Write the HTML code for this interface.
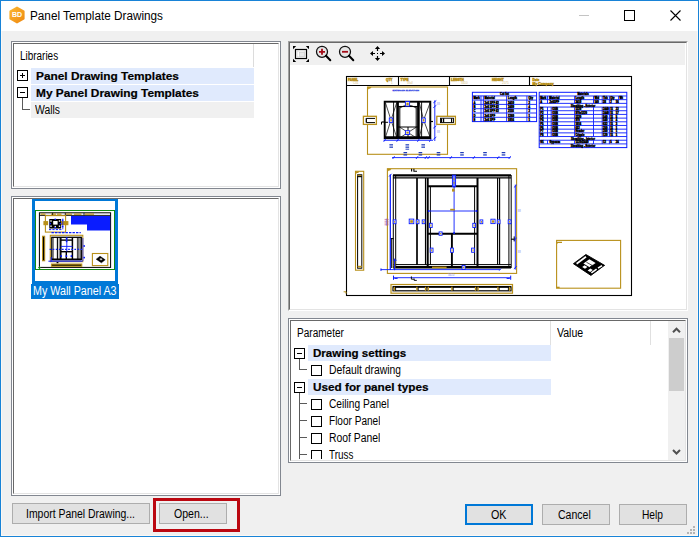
<!DOCTYPE html>
<html><head><meta charset="utf-8"><title>Panel Template Drawings</title>
<style>
html,body{margin:0;padding:0;}
body{width:699px;height:537px;overflow:hidden;background:#f0f0f0;position:relative;font-family:"Liberation Sans",sans-serif;font-size:11px;color:#000;}
.abs,.p,.in,.row,.hl,.btn,.exp,.cb,.ln,.tx{position:absolute;box-sizing:border-box;}
.p{border:1px solid #828790;background:#fff;}
.in{border:1px solid;border-color:#696969 #e3e3e3 #e3e3e3 #696969;}
.tx{height:17px;line-height:17px;white-space:nowrap;transform-origin:0 50%;}
.hl{background:#e0eafd;height:16px;}
.b{font-weight:bold;-webkit-text-stroke:0.2px #000;}
.btn{height:21px;border:1px solid #adadad;background:#e1e1e1;}
.exp{width:11px;height:11px;border:1px solid #000;background:#fff;}
.exp i{position:absolute;left:2px;top:4px;width:5px;height:1px;background:#000;}
.exp b{position:absolute;left:4px;top:2px;width:1px;height:5px;background:#000;}
.cb{width:11px;height:11px;border:1px solid #000;background:#fff;}
.ln{background:#5a5a5a;}
svg{position:absolute;left:0;top:0;}
</style></head><body>
<div class="abs" style="left:0;top:0;width:699px;height:537px;border:1px solid #1883d7;"></div><div class="abs" style="left:1px;top:1px;width:697px;height:535px;border:1px solid #fbf8f4;"></div>
<div class="abs" style="left:1px;top:1px;width:697px;height:30px;background:#fff;"></div>
<div class="tx " id="t_title" style="left:30px;top:8px;font-size:12px;transform:scaleX(0.9790);">Panel Template Drawings</div>
<div class="p" style="left:11px;top:41px;width:270px;height:148px;"></div><div class="in" style="left:13px;top:43px;width:266px;height:144px;"></div>
<div class="p" style="left:11px;top:196px;width:270px;height:300px;"></div><div class="in" style="left:13px;top:198px;width:266px;height:296px;"></div>
<div class="abs" style="left:288px;top:41px;width:400px;height:270px;background:#fff;border:1px solid;border-color:#a0a0a0 #fff #fff #a0a0a0;"></div><div class="in" style="left:289px;top:42px;width:398px;height:268px;"></div>
<div class="p" style="left:288px;top:318px;width:400px;height:145px;"></div><div class="in" style="left:290px;top:320px;width:396px;height:141px;"></div>
<div class="tx " id="t_lib" style="left:20px;top:47.6px;font-size:12px;transform:scaleX(0.8279);">Libraries</div>
<div class="abs" style="left:253px;top:44px;width:1px;height:23px;background:#dcdcdc"></div>
<div class="hl" style="left:31px;top:68px;width:223px;"></div>
<div class="tx b" id="t_tree0" style="left:35.6px;top:67px;font-size:11.6px;transform:scaleX(1.0238);">Panel Drawing Templates</div>
<div class="hl" style="left:31px;top:85px;width:223px;"></div>
<div class="tx b" id="t_tree1" style="left:35.6px;top:84px;font-size:11.6px;transform:scaleX(1.0251);">My Panel Drawing Templates</div>
<div class="hl" style="left:31px;top:102px;width:223px;background:#f0f0f0"></div>
<div class="tx " id="t_walls" style="left:35px;top:101.6px;font-size:12px;transform:scaleX(0.8655);">Walls</div>
<div class="exp" style="left:17px;top:70px"><i></i><b></b></div>
<div class="exp" style="left:17px;top:87px"><i></i></div>
<div class="ln" style="left:22px;top:98px;width:1px;height:12px"></div>
<div class="ln" style="left:22px;top:109px;width:8px;height:1px"></div>
<div class="abs" style="left:32px;top:199px;width:86px;height:86px;background:#0078d7;"></div>
<div class="abs" style="left:35px;top:201px;width:80px;height:80px;background:#fff;"></div>
<div class="abs" style="left:31px;top:284px;width:88px;height:15px;background:#0078d7;"></div>
<div class="tx " id="t_thumb" style="left:33px;top:282.6px;color:#fff;font-size:12px;transform:scaleX(0.8922);">My Wall Panel A3</div>
<div class="abs" style="left:290px;top:43px;width:395px;height:22px;background:#f0f0f0;"></div>
<div class="tx " id="t_param" style="left:297px;top:324.6px;font-size:12px;transform:scaleX(0.8371);">Parameter</div>
<div class="tx " id="t_value" style="left:557px;top:324.6px;font-size:12px;transform:scaleX(0.8792);">Value</div>
<div class="abs" style="left:550px;top:321px;width:1px;height:24px;background:#e0e0e0"></div>
<div class="abs" style="left:650px;top:321px;width:1px;height:24px;background:#e0e0e0"></div>
<div class="hl" style="left:308px;top:345px;width:243px;"></div>
<div class="tx b" id="t_grp0" style="left:312.6px;top:344px;font-size:11.6px;transform:scaleX(0.9972);">Drawing settings</div>
<div class="exp" style="left:294px;top:348px"><i></i></div>
<div class="hl" style="left:308px;top:379px;width:243px;"></div>
<div class="tx b" id="t_grp1" style="left:312.6px;top:378px;font-size:11.6px;transform:scaleX(1.0132);">Used for panel types</div>
<div class="exp" style="left:294px;top:382px"><i></i></div>
<div class="tx " id="t_item0" style="left:329.4px;top:361.6px;height:17px;overflow:hidden;font-size:12px;transform:scaleX(0.8648);">Default drawing</div>
<div class="cb" style="left:311px;top:365px;height:11px;"></div>
<div class="tx " id="t_item1" style="left:329.4px;top:395.6px;height:17px;overflow:hidden;font-size:12px;transform:scaleX(0.8486);">Ceiling Panel</div>
<div class="cb" style="left:311px;top:399px;height:11px;"></div>
<div class="tx " id="t_item2" style="left:329.4px;top:412.6px;height:17px;overflow:hidden;font-size:12px;transform:scaleX(0.8376);">Floor Panel</div>
<div class="cb" style="left:311px;top:416px;height:11px;"></div>
<div class="tx " id="t_item3" style="left:329.4px;top:429.6px;height:17px;overflow:hidden;font-size:12px;transform:scaleX(0.8657);">Roof Panel</div>
<div class="cb" style="left:311px;top:433px;height:11px;"></div>
<div class="tx " id="t_item4" style="left:329.4px;top:446.6px;height:12px;overflow:hidden;font-size:12px;transform:scaleX(0.8256);">Truss</div>
<div class="cb" style="left:311px;top:450px;height:9px;border-bottom:none;"></div>
<div class="ln" style="left:299px;top:359px;width:1px;height:11px"></div>
<div class="ln" style="left:299px;top:369px;width:8px;height:1px"></div>
<div class="ln" style="left:299px;top:393px;width:1px;height:66px"></div>
<div class="ln" style="left:299px;top:403px;width:8px;height:1px"></div>
<div class="ln" style="left:299px;top:420px;width:8px;height:1px"></div>
<div class="ln" style="left:299px;top:437px;width:8px;height:1px"></div>
<div class="ln" style="left:299px;top:454px;width:8px;height:1px"></div>
<div class="abs" style="left:668px;top:321px;width:17px;height:139px;background:#f0f0f0;"></div>
<div class="abs" style="left:669px;top:338px;width:15px;height:53px;background:#cdcdcd;"></div>
<div class="btn" style="left:12px;top:503px;width:138px;"></div><div class="tx " id="t_b1" style="left:26px;top:505.6px;font-size:12px;transform:scaleX(0.8693);">Import Panel Drawing...</div>
<div class="btn" style="left:159px;top:503px;width:68px;"></div><div class="tx " id="t_b2" style="left:174.4px;top:505.6px;font-size:12px;transform:scaleX(0.8791);">Open...</div>
<div class="abs" style="left:153px;top:498px;width:87px;height:34px;border:3px solid #bb0710;"></div>
<div class="btn" style="left:465px;top:504px;width:68px;border:2px solid #0078d7;"></div><div class="tx " id="t_b3" style="left:491px;top:506.6px;font-size:12px;transform:scaleX(0.8939);">OK</div>
<div class="btn" style="left:542px;top:504px;width:68px;"></div><div class="tx " id="t_b4" style="left:558.4px;top:506.6px;font-size:12px;transform:scaleX(0.8781);">Cancel</div>
<div class="btn" style="left:619px;top:504px;width:68px;"></div><div class="tx " id="t_b5" style="left:642.4px;top:506.6px;font-size:12px;transform:scaleX(0.8510);">Help</div>
<svg width="699" height="537" viewBox="0 0 699 537" font-family="Liberation Sans, sans-serif">
<!-- title icon -->
<defs><linearGradient id="og" x1="0" y1="0" x2="1" y2="1"><stop offset="0" stop-color="#fbb52e"/><stop offset="1" stop-color="#ef8a12"/></linearGradient></defs><g id="appicon"><path d="M17 7.6 L23.6 11.3 V18.7 L17 22.4 L10.4 18.7 V11.3 Z" fill="url(#og)" stroke="url(#og)" stroke-width="2" stroke-linejoin="round"/><text x="17" y="17.4" font-weight="bold" font-size="7" fill="#fff" text-anchor="middle">BD</text></g>
<!-- caption buttons -->
<path d="M579 15.5 H589" stroke="#c4c4c4" stroke-width="1" fill="none"/>
<rect x="624.5" y="10.5" width="10" height="10" fill="none" stroke="#000" stroke-width="1"/>
<path d="M670.5 10.5 L680.5 20.5 M680.5 10.5 L670.5 20.5" stroke="#000" stroke-width="1.1" fill="none"/>
<!-- scrollbar arrows -->
<path d="M673 332.2 L676.5 328.7 L680 332.2" stroke="#505050" stroke-width="2" fill="none"/>
<path d="M673 450 L676.5 453.5 L680 450" stroke="#505050" stroke-width="2" fill="none"/>
<!-- size grip -->
<g fill="#b4b4b4"><rect x="693" y="526" width="2" height="2"/><rect x="690" y="529" width="2" height="2"/><rect x="693" y="529" width="2" height="2"/><rect x="687" y="532" width="2" height="2"/><rect x="690" y="532" width="2" height="2"/><rect x="693" y="532" width="2" height="2"/></g>
<!-- toolbar icons -->
<g id="fit" fill="#000"><rect x="295.5" y="49.5" width="11" height="9" fill="#fff" stroke="#000" stroke-width="1.2"/><rect x="297" y="51" width="8" height="6" fill="none" stroke="#d0d0d0" stroke-width="0.8"/><rect x="299.5" y="52.5" width="5" height="4" fill="#e8e8e8" stroke="#c8c8c8" stroke-width="0.6"/><path d="M293 46 h3.2 l-3.2 3.2z M309 46 v3.2 l-3.2 -3.2z M293 62 v-3.2 l3.2 3.2z M309 62 h-3.2 l3.2 -3.2z"/></g>
<g id="zin"><circle cx="322" cy="51.8" r="5.5" fill="#e6e6e6" stroke="#111" stroke-width="1.25"/><path d="M326 55.8 L330.3 60.3" stroke="#000" stroke-width="2" stroke-linecap="round"/><path d="M319 51.8 H325 M322 48.8 V54.8" stroke="#a40c18" stroke-width="1.8"/></g>
<g id="zout"><circle cx="345" cy="51.8" r="5.5" fill="#e6e6e6" stroke="#111" stroke-width="1.25"/><path d="M349 55.8 L353.3 60.3" stroke="#000" stroke-width="2" stroke-linecap="round"/><path d="M342 51.8 H348" stroke="#a40c18" stroke-width="1.8"/></g>
<g id="pan" fill="#000" stroke="none"><rect x="377" y="53" width="1" height="1"/><path d="M377.5 46 l2.6 3 h-5.2z M377.5 61 l2.6 -3 h-5.2z M370 53.5 l3 -2.6 v5.2z M385 53.5 l-3 -2.6 v5.2z"/><path d="M377.5 48.5 V51 M377.5 56 V58.5 M372.5 53.5 H375 M380 53.5 H382.5" stroke="#000" stroke-width="1.2"/></g>
<g id="maindrawing">
<rect x="346.5" y="76.5" width="285.0" height="219.0" stroke="#000" stroke-width="1.1" fill="none"/>
<path d="M346.5 85.5 L631.5 85.5" stroke="#000" stroke-width="1.1" fill="none"/>
<path d="M398.5 76.5 L398.5 85.5" stroke="#000" stroke-width="1.1" fill="none"/>
<path d="M449.5 76.5 L449.5 85.5" stroke="#000" stroke-width="1.1" fill="none"/>
<path d="M529.5 76.5 L529.5 85.5" stroke="#000" stroke-width="1.1" fill="none"/>
<text x="348" y="81.0" font-size="3.1" fill="#b8901a" text-anchor="start" font-weight="bold" stroke="#b8901a" stroke-width="0.45">PANEL</text>
<text x="353" y="84.3" font-size="3" fill="#d4c080" text-anchor="start" font-weight="normal">C01</text>
<text x="386" y="81.0" font-size="3.1" fill="#b8901a" text-anchor="start" font-weight="bold" stroke="#b8901a" stroke-width="0.45">QTY</text>
<text x="391" y="84.3" font-size="3" fill="#d4c080" text-anchor="start" font-weight="normal">1</text>
<text x="400.5" y="81.0" font-size="3.1" fill="#b8901a" text-anchor="start" font-weight="bold" stroke="#b8901a" stroke-width="0.45">TYPE</text>
<text x="407" y="84.3" font-size="3" fill="#d4c080" text-anchor="start" font-weight="normal">Wall</text>
<text x="451" y="81.0" font-size="3.1" fill="#b8901a" text-anchor="start" font-weight="bold" stroke="#b8901a" stroke-width="0.45">LENGTH</text>
<text x="461" y="84.3" font-size="3" fill="#d4c080" text-anchor="start" font-weight="normal">3410</text>
<text x="492" y="81.0" font-size="3.1" fill="#b8901a" text-anchor="start" font-weight="bold" stroke="#b8901a" stroke-width="0.45">HEIGHT</text>
<text x="502" y="84.3" font-size="3" fill="#d4c080" text-anchor="start" font-weight="normal">2575</text>
<text x="532.6" y="80.8" font-size="3.0" fill="#b8901a" text-anchor="start" font-weight="bold" stroke="#b8901a" stroke-width="0.45">Date</text>
<text x="532.6" y="85.4" font-size="3.4" fill="#b8901a" text-anchor="start" font-weight="bold" stroke="#b8901a" stroke-width="0.45">My Company</text>
<rect x="367.5" y="87" width="80.0" height="67.3" stroke="#b8901a" stroke-width="1.1" fill="none"/>
<path d="M367.6 87.1 h3.9 l-1.4 1.7 h-1.2 l-1.3 1.2 z" fill="#b8901a"/>
<text x="392.6" y="91.4" font-size="2.45" fill="#4452e6" text-anchor="start" font-weight="normal" stroke="#4452e6" stroke-width="0.42">EXTERIOR ELEVATION</text>
<rect x="363.4" y="116.3" width="13.0" height="8.1" stroke="#b8901a" stroke-width="1.3" fill="#fff"/>
<path d="M366.3 118.4 L375 118.4" stroke="#000" stroke-width="1.0" fill="none"/>
<path d="M366.3 122.6 L375 122.6" stroke="#000" stroke-width="1.0" fill="none"/>
<path d="M366.3 118.2 L366.3 122.6" stroke="#000" stroke-width="1.3" fill="none"/>
<rect x="436.8" y="116.3" width="18.6" height="8.1" stroke="#b8901a" stroke-width="1.3" fill="#fff"/>
<rect x="440.5" y="118.2" width="13.0" height="4.4" stroke="#000" stroke-width="0.9" fill="none"/>
<path d="M441.6 118.2 L441.6 122.6" stroke="#000" stroke-width="1.2" fill="none"/>
<path d="M443.6 118.2 L443.6 122.6" stroke="#000" stroke-width="1.2" fill="none"/>
<path d="M451.6 118.2 L451.6 122.6" stroke="#000" stroke-width="1.2" fill="none"/>
<rect x="384.7" y="101.7" width="45.6" height="36.5" stroke="#000" stroke-width="1.9" fill="none"/>
<path d="M384 137.6 L431 137.6" stroke="#000" stroke-width="2.6" fill="none"/>
<path d="M397.6 101 L397.6 138.5" stroke="#000" stroke-width="2.6" fill="none"/>
<path d="M418.4 101 L418.4 138.5" stroke="#000" stroke-width="2.6" fill="none"/>
<path d="M393.6 102 L393.6 138" stroke="#000" stroke-width="0.9" fill="none"/>
<path d="M421.6 102 L421.6 138" stroke="#000" stroke-width="0.9" fill="none"/>
<path d="M399.8 106.5 L399.8 138" stroke="#000" stroke-width="1" fill="none"/>
<path d="M416.2 106.5 L416.2 138" stroke="#000" stroke-width="1" fill="none"/>
<path d="M397.6 106.5 L418.4 106.5" stroke="#000" stroke-width="1.1" fill="none"/>
<path d="M397.6 127 L418.4 127" stroke="#000" stroke-width="1" fill="none"/>
<path d="M408 127 L408 138" stroke="#000" stroke-width="1" fill="none"/>
<path d="M385.5 103 L391 120" stroke="#000" stroke-width="0.7" fill="none"/>
<path d="M391 120 L385.5 137" stroke="#000" stroke-width="0.7" fill="none"/>
<path d="M396.6 103 L391 120" stroke="#000" stroke-width="0.7" fill="none"/>
<path d="M391 120 L396.6 137" stroke="#000" stroke-width="0.7" fill="none"/>
<path d="M430 103 L423.6 120" stroke="#000" stroke-width="0.7" fill="none"/>
<path d="M423.6 120 L430 137" stroke="#000" stroke-width="0.7" fill="none"/>
<path d="M419.4 103 L423.6 120" stroke="#000" stroke-width="0.7" fill="none"/>
<path d="M423.6 120 L419.4 137" stroke="#000" stroke-width="0.7" fill="none"/>
<path d="M399.5 127 L416.5 138" stroke="#000" stroke-width="0.7" fill="none"/>
<path d="M416.5 127 L399.5 138" stroke="#000" stroke-width="0.7" fill="none"/>
<path d="M399.8 108 Q408 102.5 416.2 108" stroke="#000" stroke-width="0.8" fill="none"/>
<path d="M381.5 122 L384.7 122" stroke="#000" stroke-width="1.2" fill="none"/>
<path d="M381.5 122 L381.5 124.5" stroke="#000" stroke-width="1" fill="none"/>
<path d="M384.7 122.3 L388 122.3" stroke="#000" stroke-width="1" fill="none"/>
<path d="M430.3 121.5 L433 121.5" stroke="#000" stroke-width="1.2" fill="none"/>
<rect x="405.4" y="101.5" width="4.2" height="4.6" stroke="#0a1cff" stroke-width="0.9" fill="#fff"/>
<rect x="406.4" y="102.6" width="2.3" height="2.6" stroke="none" stroke-width="0" fill="#b8901a"/>
<rect x="389.3" y="118.0" width="3.4" height="4.4" stroke="#0a1cff" stroke-width="0.9" fill="#fff"/>
<rect x="390.3" y="119.1" width="1.5" height="2.4" stroke="none" stroke-width="0" fill="#b8901a"/>
<rect x="421.9" y="118.0" width="3.4" height="4.4" stroke="#0a1cff" stroke-width="0.9" fill="#fff"/>
<rect x="422.9" y="119.1" width="1.5" height="2.4" stroke="none" stroke-width="0" fill="#b8901a"/>
<rect x="405.4" y="130.7" width="4.2" height="3.8" stroke="#0a1cff" stroke-width="0.9" fill="#fff"/>
<rect x="406.4" y="131.8" width="2.3" height="1.8" stroke="none" stroke-width="0" fill="#b8901a"/>
<path d="M383.5 140.3 L433 140.3" stroke="#0a1cff" stroke-width="0.9" fill="none"/>
<path d="M383.7 141.8 L385.7 138.8" stroke="#0a1cff" stroke-width="0.9" fill="none"/>
<path d="M396.6 141.8 L398.6 138.8" stroke="#0a1cff" stroke-width="0.9" fill="none"/>
<path d="M417.4 141.8 L419.4 138.8" stroke="#0a1cff" stroke-width="0.9" fill="none"/>
<path d="M429.3 141.8 L431.3 138.8" stroke="#0a1cff" stroke-width="0.9" fill="none"/>
<path d="M434.8 100.3 L434.8 141" stroke="#0a1cff" stroke-width="0.9" fill="none"/>
<path d="M433.3 102.9 L436.3 100.5" stroke="#0a1cff" stroke-width="0.9" fill="none"/>
<path d="M433.3 107.7 L436.3 105.3" stroke="#0a1cff" stroke-width="0.9" fill="none"/>
<path d="M433.3 128.2 L436.3 125.8" stroke="#0a1cff" stroke-width="0.9" fill="none"/>
<path d="M433.3 139.39999999999998 L436.3 137.0" stroke="#0a1cff" stroke-width="0.9" fill="none"/>
<path d="M389.4 144.85 L393.0 144.85" stroke="#0c2cb4" stroke-width="1.15" fill="none"/>
<path d="M389.4 147.15 L393.0 147.15" stroke="#0c2cb4" stroke-width="1.15" fill="none"/>
<path d="M405.5 144.85 L409.1 144.85" stroke="#0c2cb4" stroke-width="1.15" fill="none"/>
<path d="M405.5 147.15 L409.1 147.15" stroke="#0c2cb4" stroke-width="1.15" fill="none"/>
<path d="M421.4 144.85 L425.0 144.85" stroke="#0c2cb4" stroke-width="1.15" fill="none"/>
<path d="M421.4 147.15 L425.0 147.15" stroke="#0c2cb4" stroke-width="1.15" fill="none"/>
<path d="M405.5 149.2 L409.1 149.2" stroke="#0c2cb4" stroke-width="0.9" fill="none"/>
<text x="437.0" y="105.2" font-size="2.6" fill="#7f88f0" text-anchor="start" font-weight="normal">88</text>
<text x="437.0" y="133.4" font-size="2.6" fill="#7f88f0" text-anchor="start" font-weight="normal">88</text>
<path d="M392 157.6 L510.5 157.6" stroke="#0a1cff" stroke-width="0.9" fill="none"/>
<path d="M392.6 159 L394.6 156.2" stroke="#0a1cff" stroke-width="0.9" fill="none"/>
<path d="M416 159 L418 156.2" stroke="#0a1cff" stroke-width="0.9" fill="none"/>
<path d="M424.8 159 L426.8 156.2" stroke="#0a1cff" stroke-width="0.9" fill="none"/>
<path d="M427.6 159 L429.6 156.2" stroke="#0a1cff" stroke-width="0.9" fill="none"/>
<path d="M449.8 159 L451.8 156.2" stroke="#0a1cff" stroke-width="0.9" fill="none"/>
<path d="M472.8 159 L474.8 156.2" stroke="#0a1cff" stroke-width="0.9" fill="none"/>
<path d="M497.2 159 L499.2 156.2" stroke="#0a1cff" stroke-width="0.9" fill="none"/>
<path d="M508.7 159 L510.7 156.2" stroke="#0a1cff" stroke-width="0.9" fill="none"/>
<path d="M403.5 152.65 L407.1 152.65" stroke="#0c2cb4" stroke-width="1.15" fill="none"/>
<path d="M403.5 154.95000000000002 L407.1 154.95000000000002" stroke="#0c2cb4" stroke-width="1.15" fill="none"/>
<path d="M418.59999999999997 152.65 L422.2 152.65" stroke="#0c2cb4" stroke-width="1.15" fill="none"/>
<path d="M418.59999999999997 154.95000000000002 L422.2 154.95000000000002" stroke="#0c2cb4" stroke-width="1.15" fill="none"/>
<path d="M436.7 152.65 L440.3 152.65" stroke="#0c2cb4" stroke-width="1.15" fill="none"/>
<path d="M436.7 154.95000000000002 L440.3 154.95000000000002" stroke="#0c2cb4" stroke-width="1.15" fill="none"/>
<path d="M460.2 152.65 L463.8 152.65" stroke="#0c2cb4" stroke-width="1.15" fill="none"/>
<path d="M460.2 154.95000000000002 L463.8 154.95000000000002" stroke="#0c2cb4" stroke-width="1.15" fill="none"/>
<path d="M483.2 152.65 L486.8 152.65" stroke="#0c2cb4" stroke-width="1.15" fill="none"/>
<path d="M483.2 154.95000000000002 L486.8 154.95000000000002" stroke="#0c2cb4" stroke-width="1.15" fill="none"/>
<path d="M501.7 152.65 L505.3 152.65" stroke="#0c2cb4" stroke-width="1.15" fill="none"/>
<path d="M501.7 154.95000000000002 L505.3 154.95000000000002" stroke="#0c2cb4" stroke-width="1.15" fill="none"/>
<rect x="355.5" y="171.3" width="8.2" height="98.9" stroke="#b8901a" stroke-width="1.1" fill="none"/>
<path d="M355.6 171.4 h3.9 l-1.4 1.7 h-1.2 l-1.3 1.2 z" fill="#b8901a"/>
<rect x="357.6" y="174.8" width="4.2" height="93.4" stroke="#000" stroke-width="1" fill="none"/>
<path d="M357.6 176.4 L361.8 176.4" stroke="#000" stroke-width="1.6" fill="none"/>
<path d="M357.6 266.6 L361.8 266.6" stroke="#b8901a" stroke-width="1.6" fill="none"/>
<path d="M357.4 175.6 L361.6 175.6" stroke="#b8901a" stroke-width="0.9" fill="none"/>
<rect x="387.4" y="168.7" width="129.2" height="104.7" stroke="#b8901a" stroke-width="1.1" fill="none"/>
<path d="M387.6 168.79999999999998 h3.9 l-1.4 1.7 h-1.2 l-1.3 1.2 z" fill="#b8901a"/>
<path d="M411.6 168.8 V171.6 M413.9 168.8 V171.2 H417" stroke="#000" stroke-width="1.1" fill="none"/>
<path d="M393 175.3 L511 175.3" stroke="#000" stroke-width="2.2" fill="none"/>
<path d="M393 177.9 L511 177.9" stroke="#000" stroke-width="1.25" fill="none"/>
<path d="M393 267.2 L511 267.2" stroke="#000" stroke-width="2.6" fill="none"/>
<path d="M393 264.6 L511 264.6" stroke="#000" stroke-width="1.0" fill="none"/>
<path d="M393.3 175 L393.3 268" stroke="#000" stroke-width="1.0" fill="none"/>
<path d="M395.7 175 L395.7 268" stroke="#000" stroke-width="1.0" fill="none"/>
<path d="M508.9 175 L508.9 268" stroke="#000" stroke-width="1.0" fill="none"/>
<path d="M511.2 175 L511.2 268" stroke="#000" stroke-width="1.0" fill="none"/>
<path d="M417 178 L417 265" stroke="#000" stroke-width="1.7" fill="none"/>
<path d="M425.5 178 L425.5 265" stroke="#000" stroke-width="1.15" fill="none"/>
<path d="M497.6 178 L497.6 265" stroke="#000" stroke-width="1.15" fill="none"/>
<path d="M499.6 178 L499.6 265" stroke="#000" stroke-width="1.15" fill="none"/>
<path d="M427.7 178 L427.7 268" stroke="#000" stroke-width="2.0" fill="none"/>
<path d="M477.5 178 L477.5 268" stroke="#000" stroke-width="2.0" fill="none"/>
<path d="M427.7 186.2 L477.5 186.2" stroke="#000" stroke-width="1.9" fill="none"/>
<path d="M427.7 233.8 L477.5 233.8" stroke="#000" stroke-width="1.9" fill="none"/>
<path d="M430.4 186.2 L430.4 265" stroke="#000" stroke-width="1.0" fill="none"/>
<path d="M474.6 186.2 L474.6 265" stroke="#000" stroke-width="1.0" fill="none"/>
<path d="M451.9 233.8 L451.9 266" stroke="#000" stroke-width="1.9" fill="none"/>
<path d="M390.2 238.6 L393.6 238.6" stroke="#000" stroke-width="1.1" fill="none"/>
<path d="M391.7 238.6 L391.7 268" stroke="#000" stroke-width="1.0" fill="none"/>
<path d="M511 239.2 L514.8 239.2" stroke="#000" stroke-width="1.1" fill="none"/>
<path d="M514.2 236.4 L514.2 241.4" stroke="#000" stroke-width="1.0" fill="none"/>
<path d="M454.1 175.3 L454.1 233.5" stroke="#0a1cff" stroke-width="0.9" fill="none"/>
<path d="M428 211 L477 211" stroke="#0a1cff" stroke-width="0.9" fill="none"/>
<circle cx="428.6" cy="211" r="0.9" fill="#0a1cff"/>
<circle cx="476.6" cy="211" r="0.9" fill="#0a1cff"/>
<circle cx="454.1" cy="186.6" r="0.9" fill="#0a1cff"/>
<circle cx="454.1" cy="233" r="0.9" fill="#0a1cff"/>
<rect x="452.4" y="175.2" width="3.2" height="11.4" stroke="#0a1cff" stroke-width="0.9" fill="#6f7cff"/>
<rect x="453.3" y="178.4" width="1.4" height="1.4" fill="#b8901a"/>
<rect x="453.3" y="182.2" width="1.4" height="1.4" fill="#b8901a"/>
<rect x="452" y="188.6" width="2.6" height="3" fill="#b8901a"/>
<rect x="450.2" y="208.8" width="4.6" height="1.7" fill="#b8901a"/>
<rect x="432" y="266.6" width="14.6" height="1.5" fill="#b8901a"/>
<rect x="409.2" y="219.1" width="4.6" height="4.6" stroke="#0a1cff" stroke-width="0.9" fill="#fff"/>
<rect x="410.2" y="220.2" width="2.7" height="2.6" stroke="none" stroke-width="0" fill="#b8901a"/>
<rect x="393.2" y="219.9" width="2.8" height="3.8" stroke="#0a1cff" stroke-width="0.9" fill="#fff"/>
<rect x="394.2" y="221.0" width="0.9" height="1.8" stroke="none" stroke-width="0" fill="#b8901a"/>
<rect x="416.2" y="219.9" width="2.8" height="3.8" stroke="#0a1cff" stroke-width="0.9" fill="#fff"/>
<rect x="417.2" y="221.0" width="0.9" height="1.8" stroke="none" stroke-width="0" fill="#b8901a"/>
<rect x="422.2" y="219.9" width="2.8" height="3.8" stroke="#0a1cff" stroke-width="0.9" fill="#fff"/>
<rect x="423.2" y="221.0" width="0.9" height="1.8" stroke="none" stroke-width="0" fill="#b8901a"/>
<rect x="480.0" y="219.9" width="2.8" height="3.8" stroke="#0a1cff" stroke-width="0.9" fill="#fff"/>
<rect x="481.0" y="221.0" width="0.9" height="1.8" stroke="none" stroke-width="0" fill="#b8901a"/>
<rect x="497.2" y="219.9" width="2.8" height="3.8" stroke="#0a1cff" stroke-width="0.9" fill="#fff"/>
<rect x="498.2" y="221.0" width="0.9" height="1.8" stroke="none" stroke-width="0" fill="#b8901a"/>
<rect x="508.2" y="219.9" width="2.8" height="3.8" stroke="#0a1cff" stroke-width="0.9" fill="#fff"/>
<rect x="509.2" y="221.0" width="0.9" height="1.8" stroke="none" stroke-width="0" fill="#b8901a"/>
<rect x="490.9" y="219.2" width="4.2" height="4.4" stroke="#0a1cff" stroke-width="0.9" fill="#fff"/>
<rect x="491.9" y="220.3" width="2.3" height="2.4" stroke="none" stroke-width="0" fill="#b8901a"/>
<rect x="429.4" y="223.3" width="2.8" height="4.2" stroke="#0a1cff" stroke-width="0.9" fill="#fff"/>
<rect x="430.4" y="224.4" width="0.9" height="2.2" stroke="none" stroke-width="0" fill="#b8901a"/>
<rect x="472.8" y="223.3" width="2.8" height="4.2" stroke="#0a1cff" stroke-width="0.9" fill="#fff"/>
<rect x="473.8" y="224.4" width="0.9" height="2.2" stroke="none" stroke-width="0" fill="#b8901a"/>
<rect x="430.2" y="248.1" width="2.8" height="4.2" stroke="#0a1cff" stroke-width="0.9" fill="#fff"/>
<rect x="431.2" y="249.2" width="0.9" height="2.2" stroke="none" stroke-width="0" fill="#b8901a"/>
<rect x="471.6" y="248.1" width="2.8" height="4.2" stroke="#0a1cff" stroke-width="0.9" fill="#fff"/>
<rect x="472.6" y="249.2" width="0.9" height="2.2" stroke="none" stroke-width="0" fill="#b8901a"/>
<rect x="450.6" y="248.1" width="2.8" height="4.2" stroke="#0a1cff" stroke-width="0.9" fill="#fff"/>
<rect x="451.6" y="249.2" width="0.9" height="2.2" stroke="none" stroke-width="0" fill="#b8901a"/>
<rect x="439.1" y="231.9" width="3.0" height="3.4" stroke="#0a1cff" stroke-width="0.9" fill="#fff"/>
<rect x="440.1" y="233.0" width="1.1" height="1.4" stroke="none" stroke-width="0" fill="#b8901a"/>
<rect x="462.1" y="265.4" width="3.0" height="4.0" stroke="#0a1cff" stroke-width="0.9" fill="#fff"/>
<rect x="463.1" y="266.5" width="1.1" height="2.0" stroke="none" stroke-width="0" fill="#b8901a"/>
<path d="M384.6 219.4 L388.6 219.4" stroke="#c8506e" stroke-width="0.7" fill="none"/>
<path d="M384.6 221.2 L388.6 221.2" stroke="#c8506e" stroke-width="0.7" fill="none"/>
<path d="M384.6 223 L388.6 223" stroke="#c8506e" stroke-width="0.7" fill="none"/>
<path d="M384.6 224.8 L388.6 224.8" stroke="#c8506e" stroke-width="0.7" fill="none"/>
<path d="M386.8 218.6 L386.8 225.6" stroke="#5a5aff" stroke-width="0.7" fill="none"/>
<path d="M390.3 174.6 L390.3 270" stroke="#0a1cff" stroke-width="1.25" fill="none"/>
<path d="M381 269.6 L500 269.6" stroke="#0a1cff" stroke-width="0.9" fill="none"/>
<path d="M389 176.6 L391.6 173.8" stroke="#0a1cff" stroke-width="0.9" fill="none"/>
<path d="M381 268.4 L381 270.8" stroke="#0a1cff" stroke-width="1.2" fill="none"/>
<rect x="393.6" y="259.6" width="1.8" height="8.4" fill="#b8901a"/>
<path d="M394.6 258.6 L394.6 270.2" stroke="#0a1cff" stroke-width="1.0" fill="none"/>
<path d="M393.2 260.2 L396.6 260.2" stroke="#0a1cff" stroke-width="0.9" fill="none"/>
<path d="M499.2 270.6 L501.2 268.6" stroke="#0a1cff" stroke-width="0.9" fill="none"/>
<path d="M515.3 184.6 L515.3 269.6" stroke="#0a1cff" stroke-width="0.9" fill="none"/>
<path d="M513.9 187.5 L516.7 184.89999999999998" stroke="#0a1cff" stroke-width="0.9" fill="none"/>
<path d="M513.9 240.5 L516.7 237.89999999999998" stroke="#0a1cff" stroke-width="0.9" fill="none"/>
<path d="M513.9 268.90000000000003 L516.7 266.3" stroke="#0a1cff" stroke-width="0.9" fill="none"/>
<text x="517.8" y="212" font-size="2.6" fill="#8088f0" text-anchor="start" font-weight="normal">88</text>
<text x="517.8" y="253.4" font-size="2.6" fill="#8088f0" text-anchor="start" font-weight="normal">88</text>
<path d="M393.4 277.7 L510.8 277.7" stroke="#0a1cff" stroke-width="0.9" fill="none"/>
<path d="M393.5 275.6 L393.5 279.8" stroke="#0a1cff" stroke-width="1.0" fill="none"/>
<path d="M510.7 275.6 L510.7 279.8" stroke="#0a1cff" stroke-width="1.0" fill="none"/>
<path d="M394.4 278.5 L397.6 278.5" stroke="#0a1cff" stroke-width="0.9" fill="none"/>
<path d="M506.6 278.5 L509.8 278.5" stroke="#0a1cff" stroke-width="0.9" fill="none"/>
<text x="448" y="276.4" font-size="2.8" fill="#7f88f0" text-anchor="start" font-weight="normal">3410</text>
<path d="M411.4 276.4 V279.2 H414.2 M414.2 278.6 V280.4 H416.8" stroke="#000" stroke-width="0.9" fill="none"/>
<rect x="391" y="284.5" width="121.5" height="8.7" stroke="#b8901a" stroke-width="1.2" fill="none"/>
<rect x="393" y="286.8" width="118" height="4.0" stroke="#000" stroke-width="1.2" fill="none"/>
<path d="M393 286.9 L511 286.9" stroke="#000" stroke-width="1.6" fill="none"/>
<path d="M394.4 286.8 L394.4 290.8" stroke="#b8901a" stroke-width="1.5" fill="none"/>
<path d="M417 286.8 L417 290.8" stroke="#b8901a" stroke-width="1.5" fill="none"/>
<path d="M425.6 286.8 L425.6 290.8" stroke="#b8901a" stroke-width="1.5" fill="none"/>
<path d="M428.2 286.8 L428.2 290.8" stroke="#b8901a" stroke-width="1.5" fill="none"/>
<path d="M452 286.8 L452 290.8" stroke="#b8901a" stroke-width="1.5" fill="none"/>
<path d="M475.6 286.8 L475.6 290.8" stroke="#b8901a" stroke-width="1.5" fill="none"/>
<path d="M478 286.8 L478 290.8" stroke="#b8901a" stroke-width="1.5" fill="none"/>
<path d="M498 286.8 L498 290.8" stroke="#b8901a" stroke-width="1.5" fill="none"/>
<path d="M509.6 286.8 L509.6 290.8" stroke="#b8901a" stroke-width="1.5" fill="none"/>
<path d="M395.6 286.8 L395.6 290.8" stroke="#000" stroke-width="0.9" fill="none"/>
<path d="M418.2 286.8 L418.2 290.8" stroke="#000" stroke-width="0.9" fill="none"/>
<path d="M426.9 286.8 L426.9 290.8" stroke="#000" stroke-width="0.9" fill="none"/>
<path d="M453.2 286.8 L453.2 290.8" stroke="#000" stroke-width="0.9" fill="none"/>
<path d="M476.8 286.8 L476.8 290.8" stroke="#000" stroke-width="0.9" fill="none"/>
<path d="M499.2 286.8 L499.2 290.8" stroke="#000" stroke-width="0.9" fill="none"/>
<path d="M508.4 286.8 L508.4 290.8" stroke="#000" stroke-width="0.9" fill="none"/>
<path d="M343.6 291.8 H346 V293.6" stroke="#b8901a" stroke-width="1" fill="none"/>
<rect x="472.4" y="92.3" width="64.2" height="29.3" stroke="#0a1cff" stroke-width="1.0" fill="none"/>
<path d="M472.4 95.9 L536.6 95.9" stroke="#0a1cff" stroke-width="0.9" fill="none"/>
<path d="M472.4 100.1 L536.6 100.1" stroke="#0a1cff" stroke-width="0.9" fill="none"/>
<path d="M472.4 104.4 L536.6 104.4" stroke="#0a1cff" stroke-width="0.9" fill="none"/>
<path d="M472.4 108.7 L536.6 108.7" stroke="#0a1cff" stroke-width="0.9" fill="none"/>
<path d="M472.4 113.0 L536.6 113.0" stroke="#0a1cff" stroke-width="0.9" fill="none"/>
<path d="M472.4 117.3 L536.6 117.3" stroke="#0a1cff" stroke-width="0.9" fill="none"/>
<path d="M481 95.9 L481 121.6" stroke="#0a1cff" stroke-width="0.9" fill="none"/>
<path d="M483.4 95.9 L483.4 121.6" stroke="#0a1cff" stroke-width="0.9" fill="none"/>
<path d="M506.6 95.9 L506.6 121.6" stroke="#0a1cff" stroke-width="0.9" fill="none"/>
<path d="M526.9 95.9 L526.9 121.6" stroke="#0a1cff" stroke-width="0.9" fill="none"/>
<text x="504.5" y="95.2" font-size="2.6" fill="#000" text-anchor="middle" font-weight="bold" stroke="#000" stroke-width="0.35">Cut list</text>
<text x="473.4" y="99.4" font-size="2.7" fill="#000" text-anchor="start" font-weight="bold" stroke="#000" stroke-width="0.4">Mark</text>
<text x="484.6" y="99.4" font-size="2.7" fill="#000" text-anchor="start" font-weight="bold" stroke="#000" stroke-width="0.4">Material</text>
<text x="508" y="99.4" font-size="2.7" fill="#000" text-anchor="start" font-weight="bold" stroke="#000" stroke-width="0.4">Length</text>
<text x="528.4" y="99.4" font-size="2.7" fill="#000" text-anchor="start" font-weight="bold" stroke="#000" stroke-width="0.4">Qty</text>
<text x="473.4" y="103.7" font-size="2.7" fill="#000" text-anchor="start" font-weight="bold" stroke="#000" stroke-width="0.4">A</text>
<text x="484.6" y="103.7" font-size="2.7" fill="#000" text-anchor="start" font-weight="bold" stroke="#000" stroke-width="0.4">2x6 SPF #2</text>
<text x="508" y="103.7" font-size="2.7" fill="#000" text-anchor="start" font-weight="bold" stroke="#000" stroke-width="0.4">3410</text>
<text x="528.4" y="103.7" font-size="2.7" fill="#000" text-anchor="start" font-weight="bold" stroke="#000" stroke-width="0.4">2</text>
<text x="473.4" y="108.0" font-size="2.7" fill="#000" text-anchor="start" font-weight="bold" stroke="#000" stroke-width="0.4">B</text>
<text x="484.6" y="108.0" font-size="2.7" fill="#000" text-anchor="start" font-weight="bold" stroke="#000" stroke-width="0.4">2x6 SPF #2</text>
<text x="508" y="108.0" font-size="2.7" fill="#000" text-anchor="start" font-weight="bold" stroke="#000" stroke-width="0.4">2499</text>
<text x="528.4" y="108.0" font-size="2.7" fill="#000" text-anchor="start" font-weight="bold" stroke="#000" stroke-width="0.4">4</text>
<text x="473.4" y="112.3" font-size="2.7" fill="#000" text-anchor="start" font-weight="bold" stroke="#000" stroke-width="0.4">C</text>
<text x="484.6" y="112.3" font-size="2.7" fill="#000" text-anchor="start" font-weight="bold" stroke="#000" stroke-width="0.4">2x6 SPF #2</text>
<text x="508" y="112.3" font-size="2.7" fill="#000" text-anchor="start" font-weight="bold" stroke="#000" stroke-width="0.4">2118</text>
<text x="528.4" y="112.3" font-size="2.7" fill="#000" text-anchor="start" font-weight="bold" stroke="#000" stroke-width="0.4">2</text>
<text x="473.4" y="116.6" font-size="2.7" fill="#000" text-anchor="start" font-weight="bold" stroke="#000" stroke-width="0.4">D</text>
<text x="484.6" y="116.6" font-size="2.7" fill="#000" text-anchor="start" font-weight="bold" stroke="#000" stroke-width="0.4">2x6 SPF</text>
<text x="508" y="116.6" font-size="2.7" fill="#000" text-anchor="start" font-weight="bold" stroke="#000" stroke-width="0.4">1260</text>
<text x="528.4" y="116.6" font-size="2.7" fill="#000" text-anchor="start" font-weight="bold" stroke="#000" stroke-width="0.4">1</text>
<text x="473.4" y="120.9" font-size="2.7" fill="#000" text-anchor="start" font-weight="bold" stroke="#000" stroke-width="0.4">E</text>
<text x="484.6" y="120.9" font-size="2.7" fill="#000" text-anchor="start" font-weight="bold" stroke="#000" stroke-width="0.4">2x6 SPF</text>
<text x="508" y="120.9" font-size="2.7" fill="#000" text-anchor="start" font-weight="bold" stroke="#000" stroke-width="0.4">1016</text>
<text x="528.4" y="120.9" font-size="2.7" fill="#000" text-anchor="start" font-weight="bold" stroke="#000" stroke-width="0.4">1</text>
<rect x="539.2" y="92.3" width="87.6" height="55.3" stroke="#0a1cff" stroke-width="1.0" fill="none"/>
<path d="M539.2 95.99 L626.8 95.99" stroke="#0a1cff" stroke-width="0.9" fill="none"/>
<path d="M539.2 99.67 L626.8 99.67" stroke="#0a1cff" stroke-width="0.9" fill="none"/>
<path d="M539.2 103.36 L626.8 103.36" stroke="#0a1cff" stroke-width="0.9" fill="none"/>
<path d="M539.2 107.05 L626.8 107.05" stroke="#0a1cff" stroke-width="0.9" fill="none"/>
<path d="M539.2 110.73 L626.8 110.73" stroke="#0a1cff" stroke-width="0.9" fill="none"/>
<path d="M539.2 114.42 L626.8 114.42" stroke="#0a1cff" stroke-width="0.9" fill="none"/>
<path d="M539.2 118.11 L626.8 118.11" stroke="#0a1cff" stroke-width="0.9" fill="none"/>
<path d="M539.2 121.8 L626.8 121.8" stroke="#0a1cff" stroke-width="0.9" fill="none"/>
<path d="M539.2 125.48 L626.8 125.48" stroke="#0a1cff" stroke-width="0.9" fill="none"/>
<path d="M539.2 129.17 L626.8 129.17" stroke="#0a1cff" stroke-width="0.9" fill="none"/>
<path d="M539.2 132.86 L626.8 132.86" stroke="#0a1cff" stroke-width="0.9" fill="none"/>
<path d="M539.2 136.54 L626.8 136.54" stroke="#0a1cff" stroke-width="0.9" fill="none"/>
<path d="M539.2 140.23 L626.8 140.23" stroke="#0a1cff" stroke-width="0.9" fill="none"/>
<path d="M539.2 143.92 L626.8 143.92" stroke="#0a1cff" stroke-width="0.9" fill="none"/>
<path d="M547.5 95.99 L547.5 99.67" stroke="#0a1cff" stroke-width="0.9" fill="none"/>
<path d="M549.3 95.99 L549.3 99.67" stroke="#0a1cff" stroke-width="0.9" fill="none"/>
<path d="M574.6 95.99 L574.6 99.67" stroke="#0a1cff" stroke-width="0.9" fill="none"/>
<path d="M593.5 95.99 L593.5 99.67" stroke="#0a1cff" stroke-width="0.9" fill="none"/>
<path d="M602.2 95.99 L602.2 99.67" stroke="#0a1cff" stroke-width="0.9" fill="none"/>
<path d="M609.4 95.99 L609.4 99.67" stroke="#0a1cff" stroke-width="0.9" fill="none"/>
<path d="M618.6 95.99 L618.6 99.67" stroke="#0a1cff" stroke-width="0.9" fill="none"/>
<path d="M547.5 99.67 L547.5 103.36" stroke="#0a1cff" stroke-width="0.9" fill="none"/>
<path d="M574.6 99.67 L574.6 103.36" stroke="#0a1cff" stroke-width="0.9" fill="none"/>
<path d="M593.5 99.67 L593.5 103.36" stroke="#0a1cff" stroke-width="0.9" fill="none"/>
<path d="M602.2 99.67 L602.2 103.36" stroke="#0a1cff" stroke-width="0.9" fill="none"/>
<path d="M609.4 99.67 L609.4 103.36" stroke="#0a1cff" stroke-width="0.9" fill="none"/>
<path d="M547.5 107.05 L547.5 110.73" stroke="#0a1cff" stroke-width="0.9" fill="none"/>
<path d="M551.2 107.05 L551.2 110.73" stroke="#0a1cff" stroke-width="0.9" fill="none"/>
<path d="M574.6 107.05 L574.6 110.73" stroke="#0a1cff" stroke-width="0.9" fill="none"/>
<path d="M593.5 107.05 L593.5 110.73" stroke="#0a1cff" stroke-width="0.9" fill="none"/>
<path d="M602.2 107.05 L602.2 110.73" stroke="#0a1cff" stroke-width="0.9" fill="none"/>
<path d="M609.4 107.05 L609.4 110.73" stroke="#0a1cff" stroke-width="0.9" fill="none"/>
<path d="M547.5 110.73 L547.5 114.42" stroke="#0a1cff" stroke-width="0.9" fill="none"/>
<path d="M551.2 110.73 L551.2 114.42" stroke="#0a1cff" stroke-width="0.9" fill="none"/>
<path d="M574.6 110.73 L574.6 114.42" stroke="#0a1cff" stroke-width="0.9" fill="none"/>
<path d="M593.5 110.73 L593.5 114.42" stroke="#0a1cff" stroke-width="0.9" fill="none"/>
<path d="M602.2 110.73 L602.2 114.42" stroke="#0a1cff" stroke-width="0.9" fill="none"/>
<path d="M609.4 110.73 L609.4 114.42" stroke="#0a1cff" stroke-width="0.9" fill="none"/>
<path d="M547.5 114.42 L547.5 118.11" stroke="#0a1cff" stroke-width="0.9" fill="none"/>
<path d="M551.2 114.42 L551.2 118.11" stroke="#0a1cff" stroke-width="0.9" fill="none"/>
<path d="M574.6 114.42 L574.6 118.11" stroke="#0a1cff" stroke-width="0.9" fill="none"/>
<path d="M593.5 114.42 L593.5 118.11" stroke="#0a1cff" stroke-width="0.9" fill="none"/>
<path d="M602.2 114.42 L602.2 118.11" stroke="#0a1cff" stroke-width="0.9" fill="none"/>
<path d="M609.4 114.42 L609.4 118.11" stroke="#0a1cff" stroke-width="0.9" fill="none"/>
<path d="M547.5 118.11 L547.5 121.8" stroke="#0a1cff" stroke-width="0.9" fill="none"/>
<path d="M551.2 118.11 L551.2 121.8" stroke="#0a1cff" stroke-width="0.9" fill="none"/>
<path d="M574.6 118.11 L574.6 121.8" stroke="#0a1cff" stroke-width="0.9" fill="none"/>
<path d="M593.5 118.11 L593.5 121.8" stroke="#0a1cff" stroke-width="0.9" fill="none"/>
<path d="M602.2 118.11 L602.2 121.8" stroke="#0a1cff" stroke-width="0.9" fill="none"/>
<path d="M609.4 118.11 L609.4 121.8" stroke="#0a1cff" stroke-width="0.9" fill="none"/>
<path d="M547.5 121.8 L547.5 125.48" stroke="#0a1cff" stroke-width="0.9" fill="none"/>
<path d="M551.2 121.8 L551.2 125.48" stroke="#0a1cff" stroke-width="0.9" fill="none"/>
<path d="M574.6 121.8 L574.6 125.48" stroke="#0a1cff" stroke-width="0.9" fill="none"/>
<path d="M593.5 121.8 L593.5 125.48" stroke="#0a1cff" stroke-width="0.9" fill="none"/>
<path d="M602.2 121.8 L602.2 125.48" stroke="#0a1cff" stroke-width="0.9" fill="none"/>
<path d="M609.4 121.8 L609.4 125.48" stroke="#0a1cff" stroke-width="0.9" fill="none"/>
<path d="M547.5 125.48 L547.5 129.17" stroke="#0a1cff" stroke-width="0.9" fill="none"/>
<path d="M551.2 125.48 L551.2 129.17" stroke="#0a1cff" stroke-width="0.9" fill="none"/>
<path d="M574.6 125.48 L574.6 129.17" stroke="#0a1cff" stroke-width="0.9" fill="none"/>
<path d="M593.5 125.48 L593.5 129.17" stroke="#0a1cff" stroke-width="0.9" fill="none"/>
<path d="M602.2 125.48 L602.2 129.17" stroke="#0a1cff" stroke-width="0.9" fill="none"/>
<path d="M609.4 125.48 L609.4 129.17" stroke="#0a1cff" stroke-width="0.9" fill="none"/>
<path d="M547.5 129.17 L547.5 132.86" stroke="#0a1cff" stroke-width="0.9" fill="none"/>
<path d="M551.2 129.17 L551.2 132.86" stroke="#0a1cff" stroke-width="0.9" fill="none"/>
<path d="M574.6 129.17 L574.6 132.86" stroke="#0a1cff" stroke-width="0.9" fill="none"/>
<path d="M593.5 129.17 L593.5 132.86" stroke="#0a1cff" stroke-width="0.9" fill="none"/>
<path d="M602.2 129.17 L602.2 132.86" stroke="#0a1cff" stroke-width="0.9" fill="none"/>
<path d="M609.4 129.17 L609.4 132.86" stroke="#0a1cff" stroke-width="0.9" fill="none"/>
<path d="M547.5 132.86 L547.5 136.54" stroke="#0a1cff" stroke-width="0.9" fill="none"/>
<path d="M551.2 132.86 L551.2 136.54" stroke="#0a1cff" stroke-width="0.9" fill="none"/>
<path d="M574.6 132.86 L574.6 136.54" stroke="#0a1cff" stroke-width="0.9" fill="none"/>
<path d="M593.5 132.86 L593.5 136.54" stroke="#0a1cff" stroke-width="0.9" fill="none"/>
<path d="M602.2 132.86 L602.2 136.54" stroke="#0a1cff" stroke-width="0.9" fill="none"/>
<path d="M609.4 132.86 L609.4 136.54" stroke="#0a1cff" stroke-width="0.9" fill="none"/>
<path d="M547.5 140.23 L547.5 143.92" stroke="#0a1cff" stroke-width="0.9" fill="none"/>
<path d="M574.6 140.23 L574.6 143.92" stroke="#0a1cff" stroke-width="0.9" fill="none"/>
<path d="M593.5 140.23 L593.5 143.92" stroke="#0a1cff" stroke-width="0.9" fill="none"/>
<path d="M602.2 140.23 L602.2 143.92" stroke="#0a1cff" stroke-width="0.9" fill="none"/>
<path d="M609.4 140.23 L609.4 143.92" stroke="#0a1cff" stroke-width="0.9" fill="none"/>
<text x="583" y="95.44" font-size="2.6" fill="#000" text-anchor="middle" font-weight="bold" stroke="#000" stroke-width="0.35">Materials</text>
<text x="540.2" y="99.12" font-size="2.6" fill="#000" text-anchor="start" font-weight="bold" stroke="#000" stroke-width="0.4">Mark</text>
<text x="549.6" y="99.12" font-size="2.6" fill="#000" text-anchor="start" font-weight="bold" stroke="#000" stroke-width="0.4">Material</text>
<text x="575.4" y="99.12" font-size="2.6" fill="#000" text-anchor="start" font-weight="bold" stroke="#000" stroke-width="0.4">Length</text>
<text x="594.4" y="99.12" font-size="2.6" fill="#000" text-anchor="start" font-weight="bold" stroke="#000" stroke-width="0.4">Wid</text>
<text x="603" y="99.12" font-size="2.6" fill="#000" text-anchor="start" font-weight="bold" stroke="#000" stroke-width="0.4">Thk</text>
<text x="610.2" y="99.12" font-size="2.6" fill="#000" text-anchor="start" font-weight="bold" stroke="#000" stroke-width="0.4">Qty</text>
<text x="619.6" y="99.12" font-size="2.6" fill="#000" text-anchor="start" font-weight="bold" stroke="#000" stroke-width="0.4">Wt</text>
<text x="540.2" y="102.81" font-size="2.6" fill="#000" text-anchor="start" font-weight="bold" stroke="#000" stroke-width="0.4">A</text>
<text x="549.6" y="102.81" font-size="2.6" fill="#000" text-anchor="start" font-weight="bold" stroke="#000" stroke-width="0.4">2x6SPF</text>
<text x="575.4" y="102.81" font-size="2.6" fill="#000" text-anchor="start" font-weight="bold" stroke="#000" stroke-width="0.4">3410</text>
<text x="594.4" y="102.81" font-size="2.6" fill="#000" text-anchor="start" font-weight="bold" stroke="#000" stroke-width="0.4">140</text>
<text x="603" y="102.81" font-size="2.6" fill="#000" text-anchor="start" font-weight="bold" stroke="#000" stroke-width="0.4">38</text>
<text x="610.2" y="102.81" font-size="2.6" fill="#000" text-anchor="start" font-weight="bold" stroke="#000" stroke-width="0.4">2</text>
<text x="615.8" y="102.81" font-size="2.6" fill="#000" text-anchor="start" font-weight="bold" stroke="#000" stroke-width="0.4">16</text>
<text x="583" y="106.5" font-size="2.6" fill="#000" text-anchor="middle" font-weight="bold" stroke="#000" stroke-width="0.35">Sheathing - Exterior</text>
<text x="540.2" y="110.18" font-size="2.6" fill="#000" text-anchor="start" font-weight="bold" stroke="#000" stroke-width="0.4">P1</text>
<text x="552.2" y="110.18" font-size="2.6" fill="#000" text-anchor="start" font-weight="bold" stroke="#000" stroke-width="0.4">OSB</text>
<text x="575.4" y="110.18" font-size="2.6" fill="#000" text-anchor="start" font-weight="bold" stroke="#000" stroke-width="0.4">1220</text>
<text x="603" y="110.18" font-size="2.6" fill="#000" text-anchor="start" font-weight="bold" stroke="#000" stroke-width="0.4">2440</text>
<text x="610.2" y="110.18" font-size="2.6" fill="#000" text-anchor="start" font-weight="bold" stroke="#000" stroke-width="0.4">11</text>
<text x="615.8" y="110.18" font-size="2.6" fill="#000" text-anchor="start" font-weight="bold" stroke="#000" stroke-width="0.4">22</text>
<text x="540.2" y="113.87" font-size="2.6" fill="#000" text-anchor="start" font-weight="bold" stroke="#000" stroke-width="0.4">P2</text>
<text x="552.2" y="113.87" font-size="2.6" fill="#000" text-anchor="start" font-weight="bold" stroke="#000" stroke-width="0.4">OSB</text>
<text x="575.4" y="113.87" font-size="2.6" fill="#000" text-anchor="start" font-weight="bold" stroke="#000" stroke-width="0.4">970x1220</text>
<text x="603" y="113.87" font-size="2.6" fill="#000" text-anchor="start" font-weight="bold" stroke="#000" stroke-width="0.4">2440</text>
<text x="610.2" y="113.87" font-size="2.6" fill="#000" text-anchor="start" font-weight="bold" stroke="#000" stroke-width="0.4">11</text>
<text x="615.8" y="113.87" font-size="2.6" fill="#000" text-anchor="start" font-weight="bold" stroke="#000" stroke-width="0.4">17</text>
<text x="540.2" y="117.56" font-size="2.6" fill="#000" text-anchor="start" font-weight="bold" stroke="#000" stroke-width="0.4">P3</text>
<text x="552.2" y="117.56" font-size="2.6" fill="#000" text-anchor="start" font-weight="bold" stroke="#000" stroke-width="0.4">OSB</text>
<text x="575.4" y="117.56" font-size="2.6" fill="#000" text-anchor="start" font-weight="bold" stroke="#000" stroke-width="0.4">1220</text>
<text x="603" y="117.56" font-size="2.6" fill="#000" text-anchor="start" font-weight="bold" stroke="#000" stroke-width="0.4">540</text>
<text x="610.2" y="117.56" font-size="2.6" fill="#000" text-anchor="start" font-weight="bold" stroke="#000" stroke-width="0.4">11</text>
<text x="615.8" y="117.56" font-size="2.6" fill="#000" text-anchor="start" font-weight="bold" stroke="#000" stroke-width="0.4">5</text>
<text x="540.2" y="121.25" font-size="2.6" fill="#000" text-anchor="start" font-weight="bold" stroke="#000" stroke-width="0.4">P4</text>
<text x="552.2" y="121.25" font-size="2.6" fill="#000" text-anchor="start" font-weight="bold" stroke="#000" stroke-width="0.4">OSB</text>
<text x="575.4" y="121.25" font-size="2.6" fill="#000" text-anchor="start" font-weight="bold" stroke="#000" stroke-width="0.4">970</text>
<text x="603" y="121.25" font-size="2.6" fill="#000" text-anchor="start" font-weight="bold" stroke="#000" stroke-width="0.4">540</text>
<text x="610.2" y="121.25" font-size="2.6" fill="#000" text-anchor="start" font-weight="bold" stroke="#000" stroke-width="0.4">11</text>
<text x="615.8" y="121.25" font-size="2.6" fill="#000" text-anchor="start" font-weight="bold" stroke="#000" stroke-width="0.4">4</text>
<text x="540.2" y="124.93" font-size="2.6" fill="#000" text-anchor="start" font-weight="bold" stroke="#000" stroke-width="0.4">P5</text>
<text x="552.2" y="124.93" font-size="2.6" fill="#000" text-anchor="start" font-weight="bold" stroke="#000" stroke-width="0.4">OSB</text>
<text x="575.4" y="124.93" font-size="2.6" fill="#000" text-anchor="start" font-weight="bold" stroke="#000" stroke-width="0.4">1016</text>
<text x="603" y="124.93" font-size="2.6" fill="#000" text-anchor="start" font-weight="bold" stroke="#000" stroke-width="0.4">632</text>
<text x="610.2" y="124.93" font-size="2.6" fill="#000" text-anchor="start" font-weight="bold" stroke="#000" stroke-width="0.4">11</text>
<text x="615.8" y="124.93" font-size="2.6" fill="#000" text-anchor="start" font-weight="bold" stroke="#000" stroke-width="0.4">3</text>
<text x="540.2" y="128.62" font-size="2.6" fill="#000" text-anchor="start" font-weight="bold" stroke="#000" stroke-width="0.4">P6</text>
<text x="552.2" y="128.62" font-size="2.6" fill="#000" text-anchor="start" font-weight="bold" stroke="#000" stroke-width="0.4">OSB</text>
<text x="575.4" y="128.62" font-size="2.6" fill="#000" text-anchor="start" font-weight="bold" stroke="#000" stroke-width="0.4">632</text>
<text x="603" y="128.62" font-size="2.6" fill="#000" text-anchor="start" font-weight="bold" stroke="#000" stroke-width="0.4">250</text>
<text x="610.2" y="128.62" font-size="2.6" fill="#000" text-anchor="start" font-weight="bold" stroke="#000" stroke-width="0.4">11</text>
<text x="615.8" y="128.62" font-size="2.6" fill="#000" text-anchor="start" font-weight="bold" stroke="#000" stroke-width="0.4">1</text>
<text x="540.2" y="132.31" font-size="2.6" fill="#000" text-anchor="start" font-weight="bold" stroke="#000" stroke-width="0.4">P7</text>
<text x="552.2" y="132.31" font-size="2.6" fill="#000" text-anchor="start" font-weight="bold" stroke="#000" stroke-width="0.4">OSB</text>
<text x="575.4" y="132.31" font-size="2.6" fill="#000" text-anchor="start" font-weight="bold" stroke="#000" stroke-width="0.4">Header</text>
<text x="603" y="132.31" font-size="2.6" fill="#000" text-anchor="start" font-weight="bold" stroke="#000" stroke-width="0.4">250</text>
<text x="610.2" y="132.31" font-size="2.6" fill="#000" text-anchor="start" font-weight="bold" stroke="#000" stroke-width="0.4">11</text>
<text x="615.8" y="132.31" font-size="2.6" fill="#000" text-anchor="start" font-weight="bold" stroke="#000" stroke-width="0.4">1</text>
<text x="540.2" y="135.99" font-size="2.6" fill="#000" text-anchor="start" font-weight="bold" stroke="#000" stroke-width="0.4">P8</text>
<text x="552.2" y="135.99" font-size="2.6" fill="#000" text-anchor="start" font-weight="bold" stroke="#000" stroke-width="0.4">OSB</text>
<text x="575.4" y="135.99" font-size="2.6" fill="#000" text-anchor="start" font-weight="bold" stroke="#000" stroke-width="0.4">Cripple</text>
<text x="603" y="135.99" font-size="2.6" fill="#000" text-anchor="start" font-weight="bold" stroke="#000" stroke-width="0.4">120</text>
<text x="610.2" y="135.99" font-size="2.6" fill="#000" text-anchor="start" font-weight="bold" stroke="#000" stroke-width="0.4">11</text>
<text x="615.8" y="135.99" font-size="2.6" fill="#000" text-anchor="start" font-weight="bold" stroke="#000" stroke-width="0.4">1</text>
<text x="583" y="139.68" font-size="2.6" fill="#000" text-anchor="middle" font-weight="bold" stroke="#000" stroke-width="0.35">Sheathing - Interior</text>
<text x="540.2" y="143.37" font-size="2.6" fill="#000" text-anchor="start" font-weight="bold" stroke="#000" stroke-width="0.4">G1</text>
<text x="549.6" y="143.37" font-size="2.6" fill="#000" text-anchor="start" font-weight="bold" stroke="#000" stroke-width="0.4">Gypsum</text>
<text x="575.4" y="143.37" font-size="2.6" fill="#000" text-anchor="start" font-weight="bold" stroke="#000" stroke-width="0.4">1220x2440</text>
<text x="603" y="143.37" font-size="2.6" fill="#000" text-anchor="start" font-weight="bold" stroke="#000" stroke-width="0.4">12</text>
<text x="610.2" y="143.37" font-size="2.6" fill="#000" text-anchor="start" font-weight="bold" stroke="#000" stroke-width="0.4">5</text>
<text x="615.8" y="143.37" font-size="2.6" fill="#000" text-anchor="start" font-weight="bold" stroke="#000" stroke-width="0.4">24</text>
<text x="583" y="147.05" font-size="2.6" fill="#000" text-anchor="middle" font-weight="bold" stroke="#000" stroke-width="0.35">Sheathing - Exterior</text>
<rect x="556.6" y="240.4" width="64.0" height="47.8" stroke="#b8901a" stroke-width="1.1" fill="none"/>
<path d="M557.4 243.4 V242.4 H562" stroke="#b8901a" stroke-width="1.1" fill="none"/>
<path d="M556.6 287.4 H559.6" stroke="#b8901a" stroke-width="1.4" fill="none"/>
<path d="M573.4 263.7 L585.9 254.5 L599.2 262.2 L604.4 265.4 L590.9 275.4 Z" fill="#000" stroke="#000" stroke-width="0.9" stroke-linejoin="round"/>
<path d="M576.6 263.7 L586 256.8" stroke="#fff" stroke-width="1.7" fill="none"/>
<path d="M591.4 272.9 L596.6 269.2 M598 268.2 L602 265.6" stroke="#fff" stroke-width="1.6" fill="none"/>
<path d="M583.4 263.4 L589.4 259.2 L595.6 262.9 L589.6 267.2 Z" fill="#fff"/>
<path d="M586.4 262.2 L592.4 265.6 M589.6 267.2 L592.4 265.2" stroke="#000" stroke-width="0.7" fill="none"/>
<path d="M582.2 267 L584.6 265.3 L587.4 267 L585 268.8 Z M587.6 270.4 L590.4 268.4 L592.8 270 L590.2 272 Z" fill="#fff"/>
<path d="M600 263 L604.8 265.6" stroke="#000" stroke-width="0.8" fill="none"/>
</g>
<g id="thumb">
<rect x="35.5" y="210.5" width="79.0" height="59.0" stroke="#128a12" stroke-width="1.0" fill="none"/>
<rect x="39.4" y="212.8" width="71.2" height="54.6" stroke="#000" stroke-width="1.0" fill="none"/>
<path d="M39.4 215.4 L110.6 215.4" stroke="#000" stroke-width="0.9" fill="none"/>
<path d="M40.5 214.1 L45.5 214.1" stroke="#b8901a" stroke-width="1.3" fill="none"/>
<path d="M51 214.1 L56 214.1" stroke="#b8901a" stroke-width="1.3" fill="none"/>
<path d="M57 214.1 L61.5 214.1" stroke="#b8901a" stroke-width="1.3" fill="none"/>
<path d="M65.5 214.1 L72 214.1" stroke="#b8901a" stroke-width="1.3" fill="none"/>
<path d="M74 214.1 L81.5 214.1" stroke="#b8901a" stroke-width="1.3" fill="none"/>
<path d="M85 214.1 L94 214.1" stroke="#b8901a" stroke-width="1.3" fill="none"/>
<path d="M52.6 212.8 L52.6 215.4" stroke="#000" stroke-width="0.8" fill="none"/>
<path d="M65.3 212.8 L65.3 215.4" stroke="#000" stroke-width="0.8" fill="none"/>
<path d="M84 212.8 L84 215.4" stroke="#000" stroke-width="0.8" fill="none"/>
<rect x="45.4" y="215.6" width="20.2" height="16.5" stroke="#b8901a" stroke-width="1.1" fill="none"/>
<rect x="44" y="221.7" width="3.5" height="2.9" stroke="#b8901a" stroke-width="1.2" fill="#b8901a"/>
<rect x="61.6" y="221.7" width="6.2" height="2.9" stroke="#b8901a" stroke-width="1.2" fill="#b8901a"/>
<rect x="49.3" y="219" width="11.8" height="9.5" stroke="#000" stroke-width="0" fill="#000"/>
<rect x="53.2" y="221" width="4.4" height="3.6" stroke="none" stroke-width="0" fill="#fff"/>
<rect x="50.3" y="220.3" width="1.4" height="1.4" fill="#fff"/>
<rect x="58.8" y="220.3" width="1.4" height="1.4" fill="#fff"/>
<rect x="50.3" y="225.5" width="1.4" height="1.4" fill="#fff"/>
<rect x="58.8" y="225.5" width="1.4" height="1.4" fill="#fff"/>
<rect x="54.599999999999994" y="225.9" width="1.4" height="1.4" fill="#fff"/>
<rect x="54.5" y="218.60000000000002" width="1.6" height="1.4" fill="#0a1cff"/>
<rect x="49.400000000000006" y="222.9" width="1.6" height="1.4" fill="#0a1cff"/>
<rect x="59.6" y="222.9" width="1.6" height="1.4" fill="#0a1cff"/>
<rect x="54.5" y="226.9" width="1.6" height="1.4" fill="#0a1cff"/>
<rect x="61.800000000000004" y="219.5" width="1.6" height="1.4" fill="#0a1cff"/>
<rect x="61.800000000000004" y="225.9" width="1.6" height="1.4" fill="#0a1cff"/>
<path d="M49 229.6 L62 229.6" stroke="#0a1cff" stroke-width="1.0" fill="none" stroke-dasharray="2.2 1.2"/>
<path d="M62.8 218.6 L62.8 229.4" stroke="#0a1cff" stroke-width="0.8" fill="none"/>
<path d="M71 216 H110.2 V230.4 H87 V224.6 H71 Z" fill="#0a1cff"/>
<path d="M51.5 232.6 L80.8 232.6" stroke="#0a1cff" stroke-width="1.2" fill="none" stroke-dasharray="2.4 1.1"/>
<rect x="42.5" y="236.2" width="2.2" height="24.6" stroke="#b8901a" stroke-width="1.0" fill="#000"/>
<rect x="50.3" y="235.3" width="32.5" height="26.4" stroke="#b8901a" stroke-width="1.1" fill="none"/>
<rect x="51.8" y="237.3" width="29.5" height="22.3" stroke="#000" stroke-width="1.3" fill="none"/>
<path d="M51.8 259.4 L81.3 259.4" stroke="#000" stroke-width="1.8" fill="none"/>
<path d="M53.2 237.3 L53.2 259.6" stroke="#000" stroke-width="0.7" fill="none"/>
<path d="M57.4 237.3 L57.4 259.6" stroke="#000" stroke-width="1.1" fill="none"/>
<path d="M59.2 237.3 L59.2 259.6" stroke="#000" stroke-width="0.6" fill="none"/>
<path d="M60.8 237.3 L60.8 259.6" stroke="#000" stroke-width="1.5" fill="none"/>
<path d="M72.4 237.3 L72.4 259.6" stroke="#000" stroke-width="1.5" fill="none"/>
<path d="M77.4 237.3 L77.4 259.6" stroke="#000" stroke-width="0.8" fill="none"/>
<path d="M78.6 237.3 L78.6 259.6" stroke="#000" stroke-width="0.6" fill="none"/>
<path d="M80.0 237.3 L80.0 259.6" stroke="#000" stroke-width="0.7" fill="none"/>
<path d="M60.8 240.1 L72.4 240.1" stroke="#000" stroke-width="1.4" fill="none"/>
<path d="M60.8 251.7 L72.4 251.7" stroke="#000" stroke-width="1.4" fill="none"/>
<path d="M66.3 251.7 L66.3 259.6" stroke="#000" stroke-width="1.4" fill="none"/>
<path d="M66.8 237.3 L66.8 251.5" stroke="#0a1cff" stroke-width="0.9" fill="none"/>
<path d="M60.8 246.4 L72.6 246.4" stroke="#0a1cff" stroke-width="0.9" fill="none"/>
<path d="M49.6 249.4 L83.2 249.4" stroke="#0a1cff" stroke-width="1.3" fill="none" stroke-dasharray="1.6 1.5"/>
<rect x="60.400000000000006" y="255.2" width="1.6" height="1.8" fill="#0a1cff"/>
<rect x="65.60000000000001" y="255.2" width="1.6" height="1.8" fill="#0a1cff"/>
<rect x="70.60000000000001" y="255.2" width="1.6" height="1.8" fill="#0a1cff"/>
<rect x="83.4" y="245.2" width="1.6" height="1.6" fill="#0a1cff"/>
<rect x="83.4" y="256.8" width="1.6" height="1.6" fill="#0a1cff"/>
<rect x="65.8" y="237.79999999999998" width="1.6" height="1.6" fill="#0a1cff"/>
<rect x="65.8" y="240.6" width="1.6" height="1.6" fill="#0a1cff"/>
<path d="M48.4 261.2 L82.6 261.2" stroke="#0a1cff" stroke-width="1.0" fill="none"/>
<path d="M51.2 257 L51.2 261.6" stroke="#0a1cff" stroke-width="1.0" fill="none"/>
<path d="M82.9 238 L82.9 261" stroke="#0a1cff" stroke-width="0.7" fill="none"/>
<rect x="51.4" y="264" width="30.4" height="2.3" stroke="#b8901a" stroke-width="1.0" fill="#b8901a"/>
<path d="M52 265.2 L81.2 265.2" stroke="#000" stroke-width="0.9" fill="none"/>
<path d="M56.6 262.6 L58.4 262.6" stroke="#000" stroke-width="1.2" fill="none"/>
<rect x="92.4" y="253.5" width="15.4" height="12.1" stroke="#b8901a" stroke-width="1.1" fill="none"/>
<path d="M96.2 259.2 L100 256.2 L105.2 259.8 L101.4 262.8 Z M99.2 259 L101 257.9 L102.8 259.2 L101 260.4 Z" fill="#000" fill-rule="evenodd" stroke="#000" stroke-width="0.5"/>
<path d="M38 267.7 H41 M39.5 266.2 V269.4" stroke="#128a12" stroke-width="0.9" fill="none"/>
</g>
</svg>
</body></html>
